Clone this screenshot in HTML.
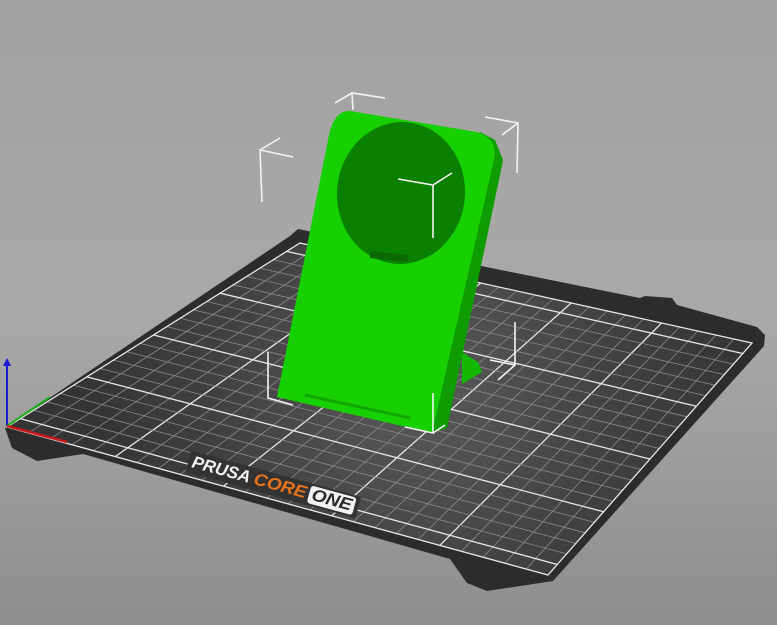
<!DOCTYPE html>
<html><head><meta charset="utf-8"><style>
html,body{margin:0;padding:0;width:777px;height:625px;overflow:hidden;background:#a4a4a4}
svg{display:block}
</style></head><body>
<svg id="s" width="777" height="625" viewBox="0 0 777 625" xmlns="http://www.w3.org/2000/svg">
<defs>
<linearGradient id="bg" x1="0" y1="0" x2="0" y2="1">
<stop offset="0" stop-color="#a2a2a2"/><stop offset="0.5" stop-color="#a9a9a9"/><stop offset="1" stop-color="#8e8e8e"/>
</linearGradient>
<radialGradient id="bed" cx="420" cy="390" r="330" gradientUnits="userSpaceOnUse">
<stop offset="0" stop-color="#5a5a5a"/><stop offset="0.6" stop-color="#414141"/><stop offset="1" stop-color="#343434"/>
</radialGradient>
<clipPath id="gc"><polygon points="300,243 752,343 548,575 7,427"/></clipPath>
</defs>
<rect width="777" height="625" fill="url(#bg)"/>
<polygon fill="#2c2c2c" points="5,428 290,236 298,229 640,298 645,296 672,298 677,305 757,327 765,335 764,346 553,581 540,583 487,591 467,583 450,559 83,454 37,461 12,448"/>
<polygon fill="url(#bed)" points="300,243 752,343 548,575 7,427"/>
<g id="grid" clip-path="url(#gc)"></g>
<polygon fill="none" stroke="#e8e8e8" stroke-width="1.3" points="300,243 752,343 548,575 7,427"/>
<g transform="translate(191,467) rotate(15.3)" font-family="Liberation Sans, sans-serif" font-weight="bold" font-size="17" font-style="italic">
<rect x="-4" y="-16" width="176" height="22" fill="#333"/>
<text x="0" y="0" fill="#f2f2f2" textLength="60" lengthAdjust="spacingAndGlyphs">PRUSA</text>
<text x="64" y="0" fill="#e8731a" textLength="54" lengthAdjust="spacingAndGlyphs">CORE</text>
<rect x="121" y="-14" width="47" height="18" rx="3" fill="#f2f2f2"/>
<text x="124" y="0" fill="#2a2a2a" textLength="41" lengthAdjust="spacingAndGlyphs">ONE</text>
</g>
<line x1="7" y1="426" x2="7" y2="362" stroke="#1a1ad0" stroke-width="2"/>
<polygon points="3,366 7,358 11,366" fill="#1a1ad0"/>
<line x1="7" y1="426" x2="50" y2="397" stroke="#22b022" stroke-width="2"/>
<line x1="7" y1="426" x2="67" y2="442" stroke="#c81818" stroke-width="2.5"/>
<polygon fill="#12b800" points="462,352 478,362 482,372 462,384"/>
<polygon fill="#0e9c00" points="480,132 495,140 503,160 500,175 447,428 432,433 470,150"/>
<path fill="#17d000" d="M350,111 L477,132 Q495,137 495,155 L432,433 L277,397 L328,140 Q333,110 350,111 Z"/>
<ellipse cx="401" cy="193" rx="64" ry="71" transform="rotate(5 401 193)" fill="#0b7f00"/>
<rect x="370" y="253" width="38" height="7" transform="rotate(6 389 256)" fill="#0a6a00"/>
<line x1="305" y1="395" x2="410" y2="418" stroke="#10a800" stroke-width="3"/>
<g stroke="#f4f4f4" stroke-width="1.6" fill="none">
<polyline points="293,157 260,150 262,202"/><line x1="260" y1="150" x2="280" y2="138"/>
<polyline points="385,98 352,93 353,110"/><line x1="352" y1="93" x2="335" y2="103"/>
<polyline points="485,117 518,123 517,173"/><line x1="518" y1="123" x2="502" y2="135"/>
<polyline points="398,179 433,185 452,173"/><line x1="433" y1="185" x2="433" y2="238"/>
<polyline points="268,352 268,398 293,405"/>
<polyline points="405,427 433,433 433,393"/><line x1="433" y1="433" x2="445" y2="425"/>
<polyline points="515,322 515,365 498,380"/><line x1="515" y1="365" x2="490" y2="360"/>
</g>
</svg>
<script>
(function(){
var g=document.getElementById('grid');
var A=[7,427],B=[548,575],C=[752,343],D=[300,243];
function P(u,v){
 var x=(1-u)*(1-v)*A[0]+u*(1-v)*B[0]+u*v*C[0]+(1-u)*v*D[0];
 var y=(1-u)*(1-v)*A[1]+u*(1-v)*B[1]+u*v*C[1]+(1-u)*v*D[1];
 return [x,y];}
var NU=25,NV=22,s='';
for(var i=1;i<NU;i++){var u=i/NU,p=P(u,0),q=P(u,1),m=(i%5==0);
 s+='<line x1="'+p[0]+'" y1="'+p[1]+'" x2="'+q[0]+'" y2="'+q[1]+'" stroke="'+(m?'#e6e6e6':'#8a8a8a')+'" stroke-width="'+(m?1.3:0.8)+'"/>';}
for(var j=1;j<NV;j++){var v=j/NV,p=P(0,v),q=P(1,v),m=(j%5==1);
 s+='<line x1="'+p[0]+'" y1="'+p[1]+'" x2="'+q[0]+'" y2="'+q[1]+'" stroke="'+(m?'#e6e6e6':'#8a8a8a')+'" stroke-width="'+(m?1.3:0.8)+'"/>';}
g.innerHTML=s;
})();
</script>
</body></html>
